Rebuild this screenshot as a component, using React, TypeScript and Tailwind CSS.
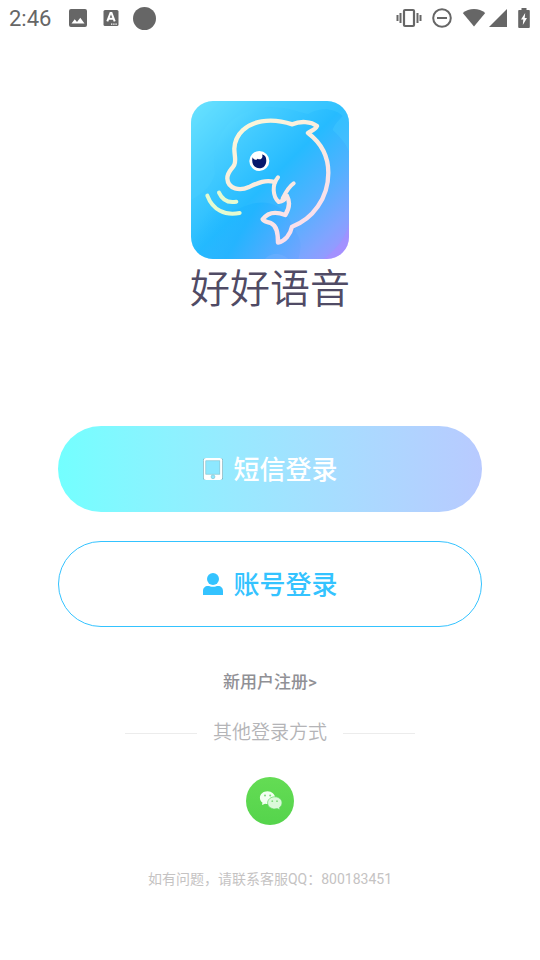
import React from 'react'

function StatusBar() {
  return (
    <header className="flex h-9 items-center justify-between pl-[9px] pr-2.5 text-[#666666]">
      <div className="flex items-center">
        <span className="w-[60px] pt-0.5 text-[22px] leading-9">2:46</span>
        <svg className="h-[18px] w-[18px]" viewBox="0 0 18 18" fill="currentColor" aria-hidden="true">
          <path
            fillRule="evenodd"
            d="M2 0h14a2 2 0 0 1 2 2v14a2 2 0 0 1-2 2H2a2 2 0 0 1-2-2V2a2 2 0 0 1 2-2Zm.5 14.500h13L11.300 8.800 8 13 5.700 10.300Z"
          />
        </svg>
        <svg className="ml-4 h-[18px] w-4" viewBox="0 0 16 18" fill="none" aria-hidden="true">
          <rect x="0.500" y="1" width="15" height="16" rx="1.500" fill="currentColor" />
          <path d="m4.300 12.300 3.200-8.300h1l3.200 8.300M5.500 9.800h5" stroke="white" strokeWidth="2" />
          <path d="M8 15.200h1.400m.8 0h1.400m.8 0h1.400" stroke="white" strokeWidth="1.200" />
        </svg>
        <span className="ml-[14px] h-[23px] w-[23px] rounded-full bg-[#666666]" />
      </div>
      <div className="flex items-center">
        <svg className="h-5 w-[26px]" viewBox="0 0 26 20" fill="none" stroke="currentColor" aria-hidden="true">
          <rect x="8" y="2" width="10" height="16" rx="1" strokeWidth="2.200" />
          <path d="M1.500 7v6M4.500 5v10M21.500 5v10M24.500 7v6" strokeWidth="2" />
        </svg>
        <svg className="ml-2.5 h-5 w-5" viewBox="0 0 20 20" fill="none" stroke="currentColor" aria-hidden="true">
          <circle cx="10" cy="10" r="8.800" strokeWidth="2" />
          <path d="M5 10h10" strokeWidth="2" />
        </svg>
        <svg className="ml-2.5 h-5 w-6" viewBox="0 0 24 20" fill="currentColor" aria-hidden="true">
          <path d="M12 18.500 .8 5c6-5.300 16.400-5.300 22.400 0Z" />
        </svg>
        <svg className="ml-0.5 h-5 w-5" viewBox="0 0 20 20" fill="currentColor" aria-hidden="true">
          <path d="M19 1v18H1Z" />
        </svg>
        <svg className="ml-2.5 h-5 w-3" viewBox="0 0 12 20" aria-hidden="true">
          <path d="M3.500 0h5v2H11q.8 0 .8 1v16q0 1-1 1H1.200q-1 0-1-1V3q0-1 .8-1h2.500Z" fill="currentColor" />
          <path d="M7.200 5 3 11.500h2.300L4.800 17 9 10H6.700Z" fill="white" />
        </svg>
      </div>
    </header>
  )
}

function DolphinLogo() {
  return (
    <svg className="h-[158px] w-[158px] rounded-[22px]" viewBox="33 33 474 474" fill="none" role="img" aria-label="好好语音">
      <defs>
        <linearGradient id="logoBg" x1="33" y1="33" x2="507" y2="507" gradientUnits="userSpaceOnUse">
          <stop offset="0" stopColor="#77ebff" />
          <stop offset="0.250" stopColor="#48ceff" />
          <stop offset="0.500" stopColor="#26bbff" />
          <stop offset="0.680" stopColor="#4eb2ff" />
          <stop offset="0.850" stopColor="#7fa4ff" />
          <stop offset="1" stopColor="#a990ff" />
        </linearGradient>
        <linearGradient id="logoLower" x1="100" y1="330" x2="360" y2="480" gradientUnits="userSpaceOnUse">
          <stop offset="0" stopColor="#1cb5ff" stopOpacity="0" />
          <stop offset="0.400" stopColor="#1cb3ff" stopOpacity="0.700" />
          <stop offset="1" stopColor="#6ba4ff" stopOpacity="0.700" />
        </linearGradient>
        <linearGradient id="logoLine" x1="140" y1="100" x2="400" y2="430" gradientUnits="userSpaceOnUse">
          <stop offset="0" stopColor="#fcf8d8" />
          <stop offset="0.500" stopColor="#f9ebdf" />
          <stop offset="1" stopColor="#f9dcef" />
        </linearGradient>
      </defs>
      <rect x="33" y="33" width="474" height="474" fill="url(#logoBg)" />
      <path
        d="M33 340C80 370 140 372 190 350S300 330 330 390 370 450 355 507H33Z"
        fill="url(#logoLower)"
      />
      <path
        d="M105 250C90 140 150 60 260 52 320 48 350 65 385 72 420 50 465 55 488 78 475 92 462 105 458 120 485 145 500 165 507 185V33H33V330C70 310 95 290 105 250Z"
        fill="#4ccfff"
        opacity="0.300"
      />
      <path d="M507 400C498 440 475 475 430 507H507Z" fill="#b288ff" opacity="0.400" />
      <path d="M255 507C270 488 305 487 325 507Z" fill="#8db8ff" opacity="0.250" />
      <g strokeLinecap="round" strokeLinejoin="round">
        <path
          d="M285 276C255 268 235 278 207 291 180 303 144 298 142 266 141 246 156 238 163 224 169 213 163 195 163 176 165 130 202 101 245 94 280 88 310 94 337 103 361 92 393 94 411 108 406 120 393 122 384 129 421 157 445 199 445 248 445 325 397 388 336 410 331 434 315 454 294 458 294 430 291 407 272 399 263 395 252 396 248 388 263 367 285 363 316 375 327 357 332 338 321 318"
          stroke="url(#logoLine)"
          strokeWidth="13"
        />
        <path
          d="M294 262C275 284 278 320 296 336 310 334 317 326 321 318M341 280C326 290 318 305 308 325"
          stroke="url(#logoLine)"
          strokeWidth="12"
        />
        <path d="M82 317C98 360 135 378 179 369M117 308C127 330 144 340 169 335" stroke="#e4fad0" strokeWidth="12" />
      </g>
      <circle cx="238" cy="213" r="30" fill="white" />
      <path d="M218 202C213 219 222 235 238 235S263 219 257 201C253 194 249 196 246 193 251 203 241 212 233 206 228 212 220 210 218 202Z" fill="#06186c" />
    </svg>
  )
}

function TabletIcon() {
  return (
    <svg className="h-6 w-[22px]" viewBox="0 0 22 24" aria-hidden="true">
      <rect x="1" y="1" width="20" height="22" rx="2.500" fill="#78aebb" />
      <rect x="1.700" y="1" width="18.600" height="22" rx="2.300" fill="white" />
      <rect x="3.800" y="3.800" width="14" height="13.400" fill="#8de8ff" stroke="#78bfce" strokeWidth="0.600" />
      <circle cx="11" cy="19.800" r="1.900" fill="#8de8ff" stroke="#78bfce" strokeWidth="0.600" />
    </svg>
  )
}

function UserIcon() {
  return (
    <svg className="h-6 w-[22px]" viewBox="0 0 22 24" fill="currentColor" aria-hidden="true">
      <circle cx="11" cy="7" r="6" />
      <path d="M1 23v-4c0-3 2-5 5-5 1.500 0 3 .8 5 .8s3.500-.8 5-.8c3 0 5 2 5 5v4Z" />
    </svg>
  )
}

function WechatIcon() {
  return (
    <svg className="h-12 w-12" viewBox="0 0 48 48" aria-hidden="true">
      <defs>
        <linearGradient id="wechatBg" x1="0" y1="0" x2="0" y2="1">
          <stop offset="0" stopColor="#64dc54" />
          <stop offset="1" stopColor="#55d44c" />
        </linearGradient>
      </defs>
      <circle cx="24" cy="24" r="24" fill="url(#wechatBg)" />
      <path d="M21.500 14.200c-4.300 0-7.600 2.900-7.600 6.500 0 2 1 3.700 2.500 4.900l-.3 2.500 3-1.400c.8.200 1.600.3 2.400.3 4.300 0 7.600-2.800 7.600-6.300s-3.300-6.500-7.600-6.500Z" fill="#f2fff1" />
      <path d="M28.800 19.800c-4 0-7.200 2.700-7.200 6.100s3.200 6 7.200 6c.8 0 1.600-.1 2.300-.3l2.700 1-.3-2.200c1.500-1.100 2.500-2.700 2.500-4.500 0-3.400-3.200-6.100-7.200-6.100Z" fill="#dcf9db" stroke="#61d963" strokeWidth="0.700" />
      <g fill="#7edc7c">
        <circle cx="19" cy="18.500" r="1" />
        <circle cx="24.200" cy="18.500" r="1" />
        <circle cx="26.300" cy="24.200" r="0.900" />
        <circle cx="31" cy="24.200" r="0.900" />
      </g>
    </svg>
  )
}

export default function App() {
  return (
    <div className="min-h-screen bg-white font-[Roboto,'Noto_Sans_CJK_SC',sans-serif]">
      <StatusBar />

      <main className="flex flex-col items-center px-[58px] pt-[65px]">
        <DolphinLogo />
        <h1 className="text-[40px] leading-[62px] font-[350] text-[#504b65]">好好语音</h1>

        {/* Login options */}
        <div className="mt-[105px] flex w-full flex-col gap-[29px]">
          <button
            type="button"
            className="flex h-[86px] w-full items-center justify-center gap-[9px] rounded-full bg-linear-to-r from-[#73ffff] to-[#b8caff] text-[26px] font-medium text-white"
          >
            <TabletIcon />
            <span className="pt-0.5">短信登录</span>
          </button>
          <button
            type="button"
            className="flex h-[86px] w-full items-center justify-center gap-[9px] rounded-full border border-[#34c3ff] text-[26px] font-medium text-[#34c3ff]"
          >
            <UserIcon />
            <span className="pt-0.5">账号登录</span>
          </button>
        </div>

        <a href="#register" className="mt-[43px] text-[17px] leading-6 font-medium text-[#909095]">
          新用户注册&gt;
        </a>

        {/* Third-party login */}
        <div className="mt-[23px] flex items-center gap-4">
          <span className="h-px w-[72px] bg-[#ececec]" />
          <h2 className="text-[19px] leading-8 font-[350] text-[#b4b4b7]">其他登录方式</h2>
          <span className="h-px w-[72px] bg-[#ececec]" />
        </div>
        <button type="button" aria-label="微信登录" className="mt-7 rounded-full">
          <WechatIcon />
        </button>

        <p className="mt-11 text-sm leading-5 text-[#c5c3c3]">如有问题，请联系客服QQ：800183451</p>
      </main>
    </div>
  )
}
